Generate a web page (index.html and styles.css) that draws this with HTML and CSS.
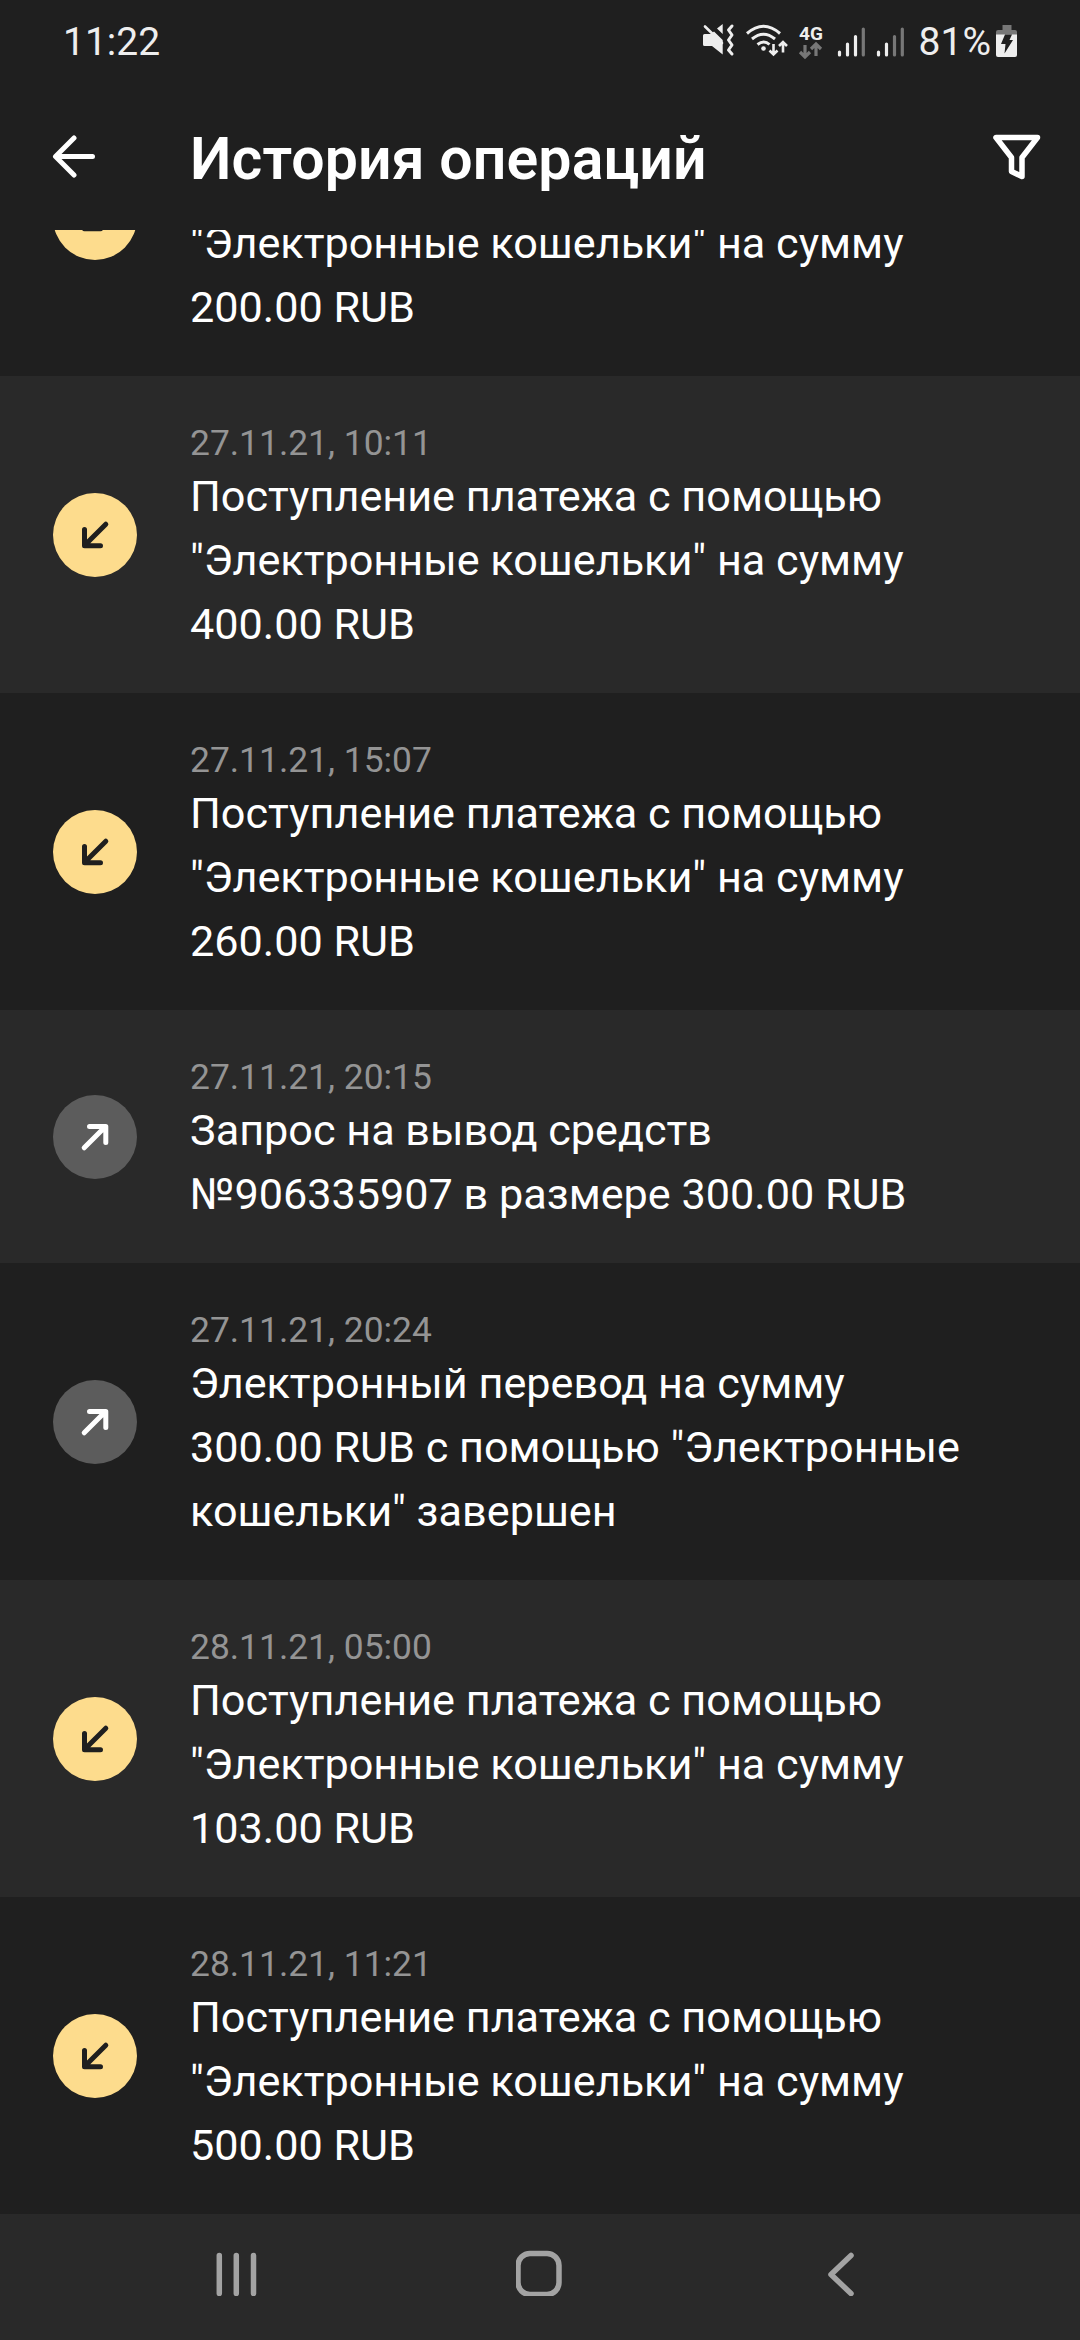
FILE: index.html
```html
<!DOCTYPE html>
<html lang="ru">
<head>
<meta charset="utf-8">
<title>История операций</title>
<link rel="stylesheet" href="styles.css">
</head>
<body>
<svg class="sprite" aria-hidden="true">
  <symbol id="in" viewBox="0 0 84 84"><path d="M52.800 31.200 32 52M31.500 36.500V52.800H47.500"/></symbol>
  <symbol id="out" viewBox="0 0 84 84"><path d="M31.200 52.800 52 32M36.500 31.500H52.800V47.500"/></symbol>
</svg>
<div class="screen">
  <div class="status">
    <span class="clock">11:22</span>
    <svg class="status-icons" viewBox="0 0 206 46" width="206" height="46">
      <g fill="#eee">
        <path d="M1 14.500q0-1.500 1.500-1.500H9l3-2.500L20.700 19v14.500L10 25H2.500Q1 25 1 23.500zM15 7.500 20.700 3v10z"/>
        <path d="M3 5.500 20 22" stroke="#eee" stroke-width="2.600" stroke-linecap="round"/>
        <path d="M30 5l-3.500 4 3.500 5-3.500 5 3.500 5-3.500 5 3.500 4" fill="none" stroke="#eee" stroke-width="3" stroke-linecap="round" stroke-linejoin="round"/>
      </g>
      <g fill="none" stroke="#eee" stroke-width="3" stroke-linecap="butt">
        <path d="M45 12.500q16.500-14.500 33 0M50 18q11.500-9.500 23 0M55.500 23.500q6.500-5 12 0"/>
        <circle cx="61.500" cy="27.500" r="2.300" fill="#eee" stroke="none"/>
        <path d="M71.500 23v10M67.500 29.500l4 4 4-4M81 31.500v-9M77 25l4-4 4 4" stroke-width="2.600"/>
      </g>
      <text class="net" x="97" y="18.500">4G</text>
      <path d="M103 24v11M98 31l5 5 5-5M114 35V24M109 28l5-5 5 5" fill="none" stroke="#777" stroke-width="3.200"/>
      <g fill="none" stroke="#eee" stroke-width="3.200" stroke-linecap="round">
        <path d="M137.500 31v3M145.500 23v11M153.500 15.500v18.500M176.500 31v3M184.500 23v11"/>
        <path stroke="#777" d="M161.300 8v26M192.500 15.500v18.500M200.300 8v26"/>
      </g>
    </svg>
    <span class="percent">81%</span>
    <svg class="battery" viewBox="0 0 22 34" width="22" height="34">
      <path d="M6.500 1h9v5H19q2 0 2 2v4H0V8q0-2 2-2h4.500z" fill="#777"/>
      <path d="M0 10.500h21V31q0 2-2 2H2q-2 0-2-2z" fill="#eee"/>
      <path d="M9 10.500h7L13.500 16H17L8.500 29.500 9.500 20H5z" fill="#1f1f1f"/>
    </svg>
  </div>
  <header class="bar">
    <svg class="back" viewBox="0 0 44 44" width="44" height="44"><path d="M40.500 22.500H4M22 4 3.500 22.500 22 41"/></svg>
    <h1 class="title">История операций</h1>
    <svg class="filter" viewBox="0 0 48 46" width="48" height="46"><path d="M3 3.500H44.500L29 23.500V42.500L18.500 37.500V23.500Z"/></svg>
  </header>
  <main class="list">
    <section class="row">
      <svg class="badge in"><use href="#in"/></svg>
      <div class="info"><p class="text">"Электронные кошельки" на сумму<br>200.00 RUB</p></div>
    </section>
    <section class="row">
      <svg class="badge in"><use href="#in"/></svg>
      <div class="info"><time class="date">27.11.21, 10:11</time><p class="text">Поступление платежа с помощью<br>"Электронные кошельки" на сумму<br>400.00 RUB</p></div>
    </section>
    <section class="row">
      <svg class="badge in"><use href="#in"/></svg>
      <div class="info"><time class="date">27.11.21, 15:07</time><p class="text">Поступление платежа с помощью<br>"Электронные кошельки" на сумму<br>260.00 RUB</p></div>
    </section>
    <section class="row">
      <svg class="badge out"><use href="#out"/></svg>
      <div class="info"><time class="date">27.11.21, 20:15</time><p class="text">Запрос на вывод средств<br>№906335907 в размере 300.00 RUB</p></div>
    </section>
    <section class="row">
      <svg class="badge out"><use href="#out"/></svg>
      <div class="info"><time class="date">27.11.21, 20:24</time><p class="text">Электронный перевод на сумму<br>300.00 RUB с помощью "Электронные<br>кошельки" завершен</p></div>
    </section>
    <section class="row">
      <svg class="badge in"><use href="#in"/></svg>
      <div class="info"><time class="date">28.11.21, 05:00</time><p class="text">Поступление платежа с помощью<br>"Электронные кошельки" на сумму<br>103.00 RUB</p></div>
    </section>
    <section class="row">
      <svg class="badge in"><use href="#in"/></svg>
      <div class="info"><time class="date">28.11.21, 11:21</time><p class="text">Поступление платежа с помощью<br>"Электронные кошельки" на сумму<br>500.00 RUB</p></div>
    </section>
  </main>
  <nav class="nav">
    <svg viewBox="0 0 48 48" width="48" height="48"><path d="M7.300 7.500v38M24.300 7.500v38M41.500 7.500v38"/></svg>
    <svg viewBox="0 0 48 48" width="48" height="48"><rect x="2" y="5.500" width="41" height="41" rx="12"/></svg>
    <svg viewBox="0 0 48 48" width="48" height="48"><path d="M31 7.500 11 26.500 31 45.500"/></svg>
  </nav>
</div>
</body>
</html>
```
FILE: styles.css
```css
* { box-sizing: border-box; }
body, h1, p { margin: 0; }
body { background: #1f1f1f; color: #fff; font-family: Roboto, sans-serif; }
.sprite { display: none; }
.screen { width: 1080px; height: 2340px; display: flex; flex-direction: column; overflow: hidden; }

.status { height: 84px; flex: none; display: flex; align-items: flex-start; padding: 0 62px 0 63px; color: #eee; font-size: 39px; line-height: 84px; }
.clock { flex: 1; }
.status-icons { margin: 21px 11px 0 0; }
.net { font: 700 19px Roboto, sans-serif; fill: #eee; }
.battery { margin: 24px 0 0 5px; }

.bar { height: 146px; flex: none; display: flex; align-items: flex-start; padding: 0 39px 0 52px; }
.bar svg { fill: none; stroke: #fff; stroke-linecap: round; stroke-linejoin: round; }
.back { margin-top: 50px; stroke-width: 5; }
.filter { margin-top: 50px; stroke-width: 5.500; }
.title { flex: 1; margin-left: 94px; font-size: 59px; font-weight: 560; line-height: 149px; letter-spacing: 0.1px; }

.list { flex: 1; min-height: 0; overflow: hidden; display: flex; flex-direction: column; justify-content: flex-end; }
.row { flex: none; display: flex; align-items: center; gap: 53px; padding: 45px 53px 36px; }
.row:first-child { padding-top: 153px; }
.row:first-child .badge { margin-top: -116px; }
.row:nth-child(even) { background: #292929; }
.badge { flex: none; width: 84px; height: 84px; margin-top: -8px; border-radius: 50%; fill: none; stroke-width: 5; stroke-linecap: round; stroke-linejoin: round; }
.in { background: #fddc8d; stroke: #1f1f1f; }
.out { background: #5c5c5c; stroke: #fff; }
.date { display: block; height: 44px; font-size: 35.400px; line-height: 44px; color: #949494; }
.text { font-size: 43.200px; line-height: 64px; white-space: nowrap; }

.nav { height: 126px; flex: none; display: flex; align-items: flex-start; justify-content: space-between; padding: 34px 212px 0; background: #292929; }
.nav svg { fill: none; stroke: #a3a3a3; stroke-width: 5.500; stroke-linecap: round; stroke-linejoin: round; }
```
